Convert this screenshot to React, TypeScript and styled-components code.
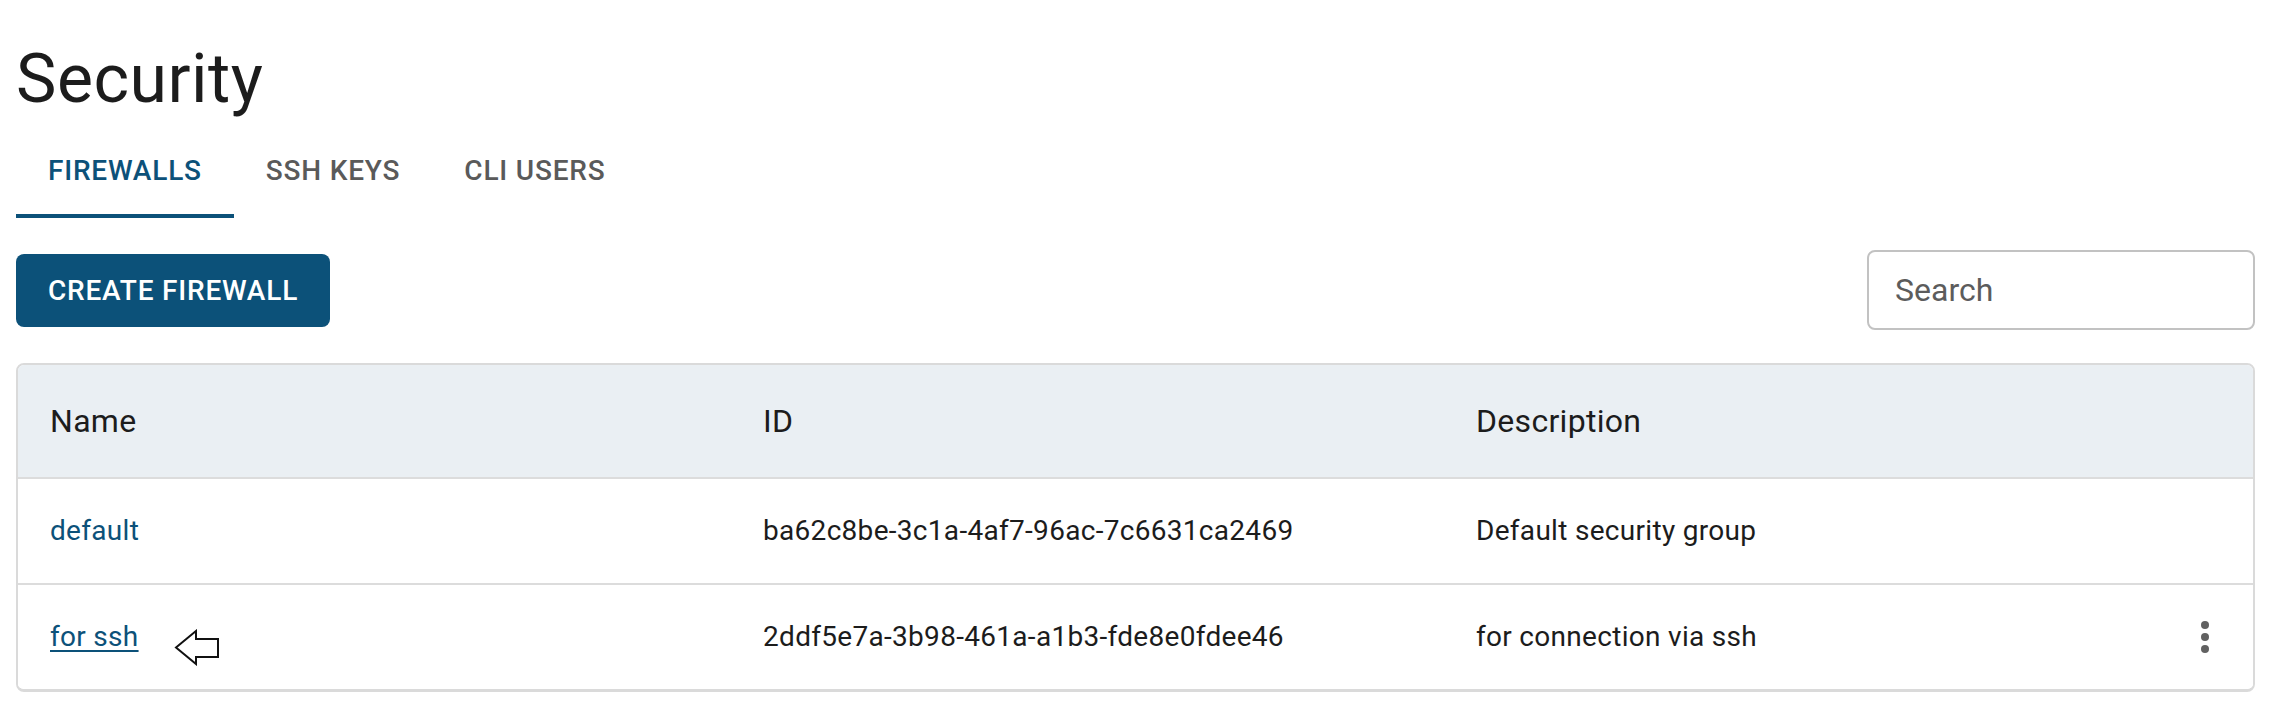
import React from "react";
import styled, { createGlobalStyle } from "styled-components";

const GlobalStyle = createGlobalStyle`
  html, body {
    margin: 0;
    padding: 0;
    background: #ffffff;
  }
  body {
    font-family: Roboto, "Liberation Sans", Arial, sans-serif;
    color: #1f1f1f;
  }
  * { box-sizing: border-box; }
`;

const PRIMARY = "#0c5179";

const Page = styled.div`
  padding: 37px 23px 32px 16px;
`;

const Title = styled.h1`
  margin: 0;
  font-size: 68px;
  font-weight: 400;
  line-height: 84px;
  letter-spacing: 0.5px;
  color: #1c1c1c;
`;

const TabBar = styled.nav`
  display: flex;
  margin-top: 1px;
  height: 96px;
`;

const Tab = styled.button<{ $active?: boolean }>`
  display: flex;
  align-items: center;
  justify-content: center;
  height: 96px;
  padding: 0 32px;
  min-width: 180px;
  border: none;
  background: transparent;
  font-family: Roboto, "Liberation Sans", Arial, sans-serif;
  font-size: 28px;
  font-weight: 500;
  letter-spacing: 0.8px;
  text-transform: uppercase;
  color: ${(p) => (p.$active ? PRIMARY : "#5a5a5a")};
  border-bottom: 4px solid ${(p) => (p.$active ? PRIMARY : "transparent")};
  padding-top: 4px;
  cursor: pointer;
`;

const Toolbar = styled.div`
  display: flex;
  align-items: center;
  justify-content: space-between;
  height: 80px;
  margin-top: 32px;
`;

const PrimaryButton = styled.button`
  height: 73px;
  padding: 0 32px;
  border: none;
  border-radius: 8px;
  background: ${PRIMARY};
  color: #ffffff;
  font-family: Roboto, "Liberation Sans", Arial, sans-serif;
  font-size: 28px;
  font-weight: 500;
  letter-spacing: 0.8px;
  text-transform: uppercase;
  cursor: pointer;
`;

const SearchInput = styled.input`
  width: 388px;
  height: 80px;
  padding: 0 26px;
  border: 2px solid #c2c2c2;
  border-radius: 8px;
  font-family: Roboto, "Liberation Sans", Arial, sans-serif;
  font-size: 32px;
  color: #1f1f1f;
  outline: none;
  &::placeholder {
    color: #5c5c5c;
    opacity: 1;
  }
`;

const TablePaper = styled.div`
  margin-top: 33px;
  border: 2px solid #dadada;
  border-bottom-width: 3px;
  border-radius: 8px;
  overflow: hidden;
`;

const Row = styled.div<{ $head?: boolean }>`
  display: grid;
  grid-template-columns: 1fr 1fr 1fr 96px;
  background: ${(p) => (p.$head ? "#eaeff3" : "#ffffff")};
  border-bottom: 2px solid #dcdcdc;
  &:last-child {
    border-bottom: none;
  }
`;

const Cell = styled.div<{ $head?: boolean }>`
  display: flex;
  align-items: center;
  height: ${(p) => (p.$head ? "112px" : "104px")};
  padding: 0 32px;
  font-size: ${(p) => (p.$head ? "32px" : "28px")};
  line-height: ${(p) => (p.$head ? "48px" : "40px")};
  letter-spacing: 0.3px;
  font-weight: 400;
  color: #1c1c1c;
  white-space: nowrap;
`;

const ActionCell = styled.div`
  display: flex;
  align-items: center;
  justify-content: center;
`;

const NameLink = styled.a<{ $underline?: boolean }>`
  color: ${PRIMARY};
  text-decoration: ${(p) => (p.$underline ? "underline" : "none")};
  text-decoration-thickness: 2px;
  text-underline-offset: 4px;
  cursor: pointer;
`;

const Pointer = styled.svg`
  margin: 10px 0 -10px 35px;
  flex: none;
`;

const KebabButton = styled.button`
  display: flex;
  align-items: center;
  justify-content: center;
  width: 48px;
  height: 48px;
  padding: 0;
  border: none;
  background: transparent;
  cursor: pointer;
`;

const ArrowIcon = () => (
  <Pointer width="46" height="37" viewBox="0 0 46 37">
    <polygon
      points="2,18.5 22,2 22,10 44,10 44,28 22,28 22,35"
      fill="#ffffff"
      stroke="#111111"
      strokeWidth="2"
      strokeLinejoin="miter"
    />
  </Pointer>
);

const KebabIcon = () => (
  <svg width="48" height="48" viewBox="0 0 48 48">
    <circle cx="24" cy="12" r="4" fill="#616161" />
    <circle cx="24" cy="24" r="4" fill="#616161" />
    <circle cx="24" cy="36" r="4" fill="#616161" />
  </svg>
);

const firewalls = [
  {
    name: "default",
    id: "ba62c8be-3c1a-4af7-96ac-7c6631ca2469",
    description: "Default security group",
    editable: false,
  },
  {
    name: "for ssh",
    id: "2ddf5e7a-3b98-461a-a1b3-fde8e0fdee46",
    description: "for connection via ssh",
    editable: true,
  },
];

export default function App() {
  return (
    <>
      <GlobalStyle />
      <Page>
        <Title>Security</Title>
        <TabBar>
          <Tab $active>Firewalls</Tab>
          <Tab>SSH Keys</Tab>
          <Tab>CLI Users</Tab>
        </TabBar>
        <Toolbar>
          <PrimaryButton>Create Firewall</PrimaryButton>
          <SearchInput placeholder="Search" />
        </Toolbar>
        <TablePaper>
          <Row $head>
            <Cell $head>Name</Cell>
            <Cell $head>ID</Cell>
            <Cell $head>Description</Cell>
            <ActionCell />
          </Row>
          {firewalls.map((fw) => (
            <Row key={fw.id}>
              <Cell>
                <NameLink $underline={fw.editable}>{fw.name}</NameLink>
                {fw.editable && <ArrowIcon />}
              </Cell>
              <Cell>{fw.id}</Cell>
              <Cell>{fw.description}</Cell>
              <ActionCell>
                {fw.editable && (
                  <KebabButton aria-label="more">
                    <KebabIcon />
                  </KebabButton>
                )}
              </ActionCell>
            </Row>
          ))}
        </TablePaper>
      </Page>
    </>
  );
}
